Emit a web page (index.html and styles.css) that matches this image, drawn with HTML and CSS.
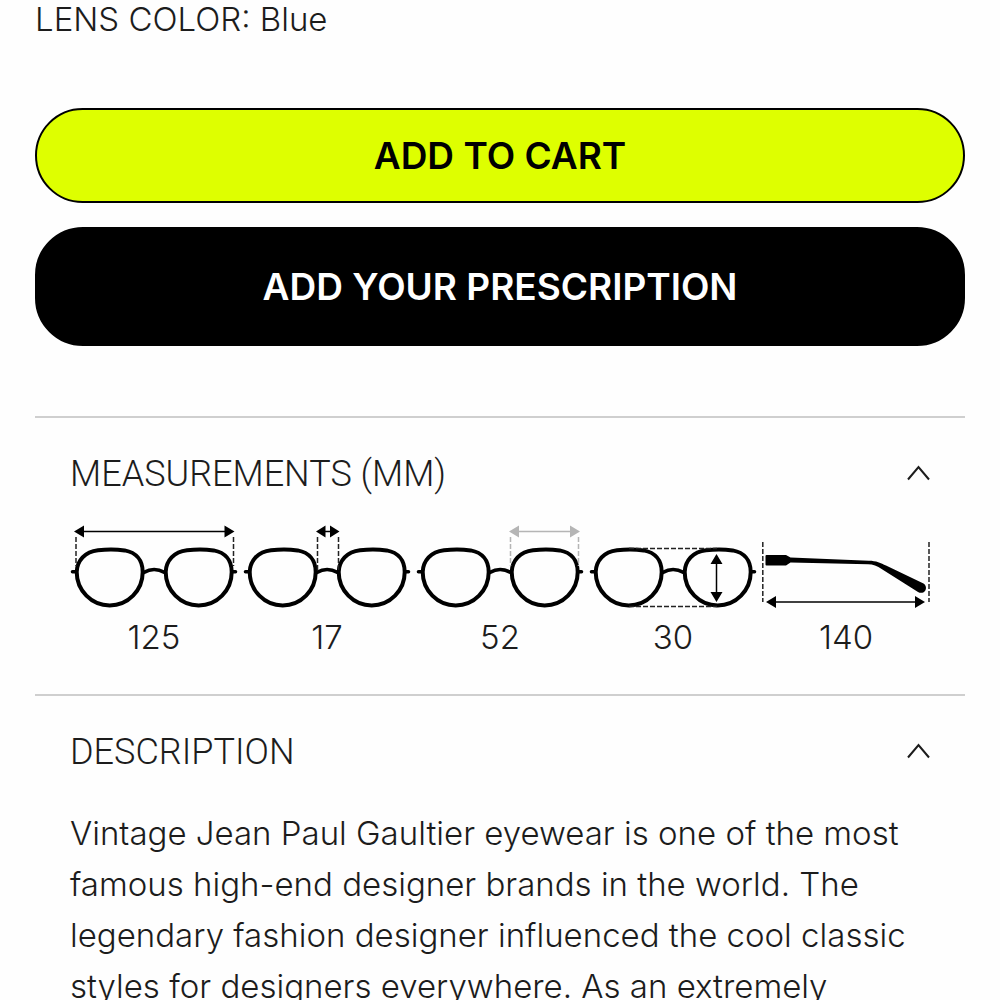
FILE: index.html
```html
<!DOCTYPE html>
<html lang="en">
<head>
  <meta charset="UTF-8" />
  <meta name="viewport" content="width=device-width, initial-scale=1.0"/>
  <title>Vintage Jean Paul Gaultier Eyewear</title>
  <link rel="stylesheet" href="styles.css">
</head>
<body>
  <svg class="sprite" aria-hidden="true">
    <symbol id="glasses" viewBox="0 0 173 100">
      <g fill="none" stroke="#000" stroke-linecap="round">
        <path stroke-width="4" d="M6.7 52C7 41 15 31.5 28 30.2C36 29.3 47 29.3 54.7 30.4C66 32.5 72.7 40 72.7 52C72.7 70.5 58 85.4 39.7 85.4C21.5 85.4 6.7 70.5 6.7 52Z"/>
        <path stroke-width="4" d="M95.7 52C96 41 104 31.5 117 30.2C125 29.3 136 29.3 143.7 30.4C155 32.5 161.7 40 161.7 52C161.7 70.5 147 85.4 128.7 85.4C110.5 85.4 95.7 70.5 95.7 52Z"/>
        <path stroke-width="3.6" d="M74 52.3Q84 46.8 94.5 52.3M2.5 51.7H6M162.5 51.7H165.5"/>
      </g>
    </symbol>
  </svg>

  <main class="product">
    <p class="lens-color">LENS COLOR: Blue</p>

    <div class="actions">
      <button type="button" class="btn btn-cart">ADD TO CART</button>
      <button type="button" class="btn btn-prescription">ADD YOUR PRESCRIPTION</button>
    </div>

    <section class="panel">
      <h2>
        <button type="button" class="panel-toggle" aria-expanded="true">
          MEASUREMENTS (MM)
          <svg class="chevron" viewBox="0 0 32 24" aria-hidden="true"><path d="M5 17.5L15.500 5L26 17.5"/></svg>
        </button>
      </h2>
      <ul class="measurements">
        <li>
          <svg viewBox="0 0 173 100" aria-hidden="true">
            <use href="#glasses"/>
            <path class="dash" d="M6 17V46M163.5 17V46"/>
            <path class="arrow" d="M10 11.5H158"/>
            <path d="M4 11.5L14 5.5V17.5ZM164.5 11.5L154.5 5.5V17.5Z"/>
          </svg>
          <span>125</span>
        </li>
        <li>
          <svg viewBox="0 0 173 100" aria-hidden="true">
            <use href="#glasses"/>
            <path class="dash" d="M74.5 17V50M95.5 17V50"/>
            <path class="arrow" d="M79 11.5H90"/>
            <path d="M73 11.5L82.5 5.5V17.5ZM96.5 11.5L87 5.5V17.5Z"/>
          </svg>
          <span>17</span>
        </li>
        <li>
          <svg viewBox="0 0 173 100" aria-hidden="true">
            <use href="#glasses"/>
            <g class="muted">
              <path class="dash" d="M94.5 17V46M162.5 17V46"/>
              <path class="arrow" d="M99 11.5H158"/>
              <path class="head" d="M93 11.5L103 5.5V17.5ZM164 11.5L154 5.5V17.5Z"/>
            </g>
          </svg>
          <span>52</span>
        </li>
        <li>
          <svg viewBox="0 0 173 100" aria-hidden="true">
            <use href="#glasses"/>
            <path class="dash" d="M40 28.5H128M40 86.5H128"/>
            <path class="arrow" d="M127.5 40V76"/>
            <path d="M127.5 34L121.5 44H133.5ZM127.5 82L121.5 72H133.5Z"/>
          </svg>
          <span>30</span>
        </li>
        <li>
          <svg viewBox="0 0 173 100" aria-hidden="true">
            <path class="dash" d="M0.8 22V82M167 22V82"/>
            <path d="M4.5 35H24L28.5 37.5L107 40.7C114 40.7 119 43 124 45.5L161.500 63.5C164.500 65.5 164.500 69 163 71C161.500 73 158.500 73.5 156 72L120 49.2C115 46.2 111 44.3 106 44.300L28.5 42.500L24 45.5H4.5Q3.500 45.5 3.5 44.5V36Q3.5 35 4.5 35Z"/>
            <path class="arrow" d="M10 82H157"/>
            <path d="M4 82L14 76V88ZM163 82L153 76V88Z"/>
          </svg>
          <span>140</span>
        </li>
      </ul>
    </section>

    <section class="panel">
      <h2>
        <button type="button" class="panel-toggle" aria-expanded="true">
          DESCRIPTION
          <svg class="chevron" viewBox="0 0 32 24" aria-hidden="true"><path d="M5 17.5L15.5 5L26 17.5"/></svg>
        </button>
      </h2>
      <p class="description">Vintage Jean Paul Gaultier eyewear is one of the most famous high-end designer brands in the world. The legendary fashion designer influenced the cool classic styles for designers everywhere. As an extremely</p>
    </section>
  </main>
</body>
</html>
```

FILE: styles.css
```css
body {
  margin: 0;
  background: #fefefe;
  color: #1c1c1c;
  font-family: Inter, "Liberation Sans", sans-serif;
  font-size: 33px;
  font-weight: 300;
}
.sprite {
  position: absolute;
  width: 0;
  height: 0;
}
.product {
  padding: 0 35px;
}
.lens-color {
  margin: 0;
  line-height: 38px;
}
.actions {
  display: flex;
  flex-direction: column;
  gap: 24px;
  margin: 70px 0;
}
.btn {
  border: 2px solid #000;
  border-radius: 48px;
  font-family: inherit;
  font-size: 37px;
  font-weight: 600;
  line-height: 43px;
  cursor: pointer;
}
.btn-cart {
  padding: 24px;
  background: #deff00;
  color: #000;
}
.btn-prescription {
  padding: 36px;
  background: #000;
  color: #fff;
}
.panel {
  border-top: 2px solid #cfcfcf;
  padding: 34px 30px 40px 35px;
}
.panel h2 {
  margin: 0;
}
.panel-toggle {
  display: flex;
  align-items: center;
  justify-content: space-between;
  width: 100%;
  padding: 0;
  border: none;
  background: none;
  color: inherit;
  font-family: Roboto, "Liberation Sans", sans-serif;
  font-size: 36px;
  font-weight: 300;
  line-height: 44px;
  text-align: left;
  cursor: pointer;
}
.chevron {
  width: 32px;
  height: 24px;
  fill: none;
  stroke: #1c1c1c;
  stroke-width: 2;
}
.measurements {
  display: grid;
  grid-template-columns: repeat(5, 1fr);
  margin: 24px 0 0;
  padding: 0;
  list-style: none;
  text-align: center;
}
.measurements svg {
  display: block;
  width: 100%;
}
.measurements span {
  display: block;
  padding-right: 5px;
  line-height: 34px;
}
.dash {
  fill: none;
  stroke: #222;
  stroke-width: 1.5;
  stroke-dasharray: 5 2;
}
.arrow {
  fill: none;
  stroke: #000;
  stroke-width: 1.5;
}
.muted .dash,
.muted .arrow {
  stroke: #b5b5b5;
}
.muted .head {
  fill: #b5b5b5;
}
.description {
  margin: 34px 0 0;
  line-height: 51px;
}
```
